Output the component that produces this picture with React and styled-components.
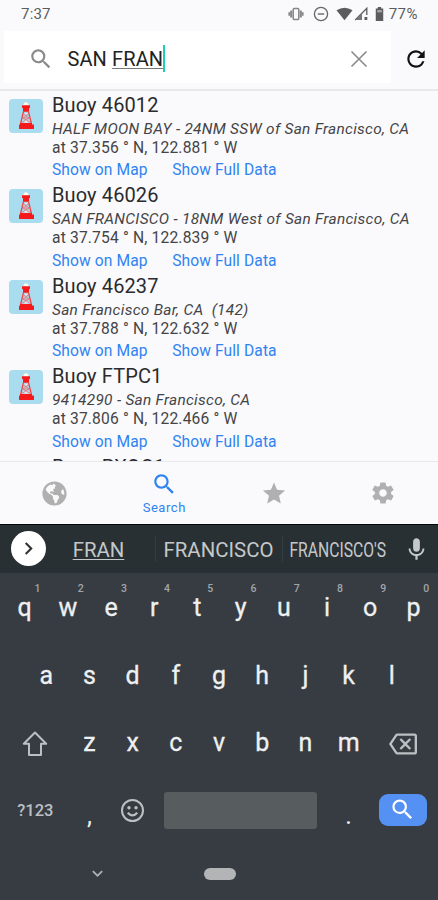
import React from "react";
import styled, { createGlobalStyle } from "styled-components";
import { FaGlobeAmericas } from "react-icons/fa";
import { IoMdSearch, IoMdSettings, IoMdStar } from "react-icons/io";
import {
  MdSearch,
  MdRefresh,
  MdMic,
  MdOutlineBackspace,
  MdChevronRight,
  MdKeyboardArrowDown,
} from "react-icons/md";

const GlobalStyle = createGlobalStyle`
  *, *::before, *::after { box-sizing: border-box; }
  body { margin: 0; background: #fafafc; }
`;

const Screen = styled.div`
  width: 438px;
  height: 900px;
  display: flex;
  flex-direction: column;
  overflow: hidden;
  background: #fafafc;
  color: #2b2b2d;
  font-family: Roboto, "Liberation Sans", sans-serif;
  svg { display: block; flex: none; }
`;

const StatusBar = styled.header`
  height: 30px;
  flex: none;
  display: flex;
  align-items: center;
  justify-content: space-between;
  padding: 0 20px 2px 21px;
  font-size: 15px;
  color: #5c5c5f;
`;

const Clock = styled.span`
  letter-spacing: 0.2px;
`;

const StatusIcons = styled.div`
  display: flex;
  align-items: center;
`;

const StatusGlyph = styled.svg`
  margin-right: ${(p) => p.$gap}px;
`;

const Battery = styled.span`
  letter-spacing: 0.5px;
`;

const SearchHeader = styled.div`
  height: 61px;
  flex: none;
  display: flex;
  padding: 1px 0 6px 4px;
  border-bottom: 2px solid #e9e9eb;
`;

const SearchField = styled.div`
  width: 387px;
  display: flex;
  align-items: center;
  padding: 3px 19px 0 23.5px;
  background: #fff;
  color: #8a8a8a;
`;

const Query = styled.div`
  flex: 1;
  display: flex;
  align-items: center;
  margin-left: 14px;
  font-size: 20px;
  line-height: 22px;
  letter-spacing: 0.1px;
  white-space: pre;
  color: #222;
`;

const Composing = styled.span`
  text-decoration: underline;
  text-decoration-color: #777;
  text-decoration-thickness: 1px;
  text-underline-offset: 2px;
`;

const Caret = styled.span`
  width: 2px;
  height: 27px;
  background: #1fcfb4;
`;

const ReloadButton = styled.div`
  flex: 1;
  display: flex;
  align-items: center;
  justify-content: center;
  padding: 3px 0 0 3px;
  color: #111;
`;

const List = styled.main`
  height: 370px;
  flex: none;
  overflow: hidden;
`;

const Row = styled.article`
  height: 90.5px;
  display: flex;
  padding: 7.5px 0 0 9px;
`;

const Thumb = styled.div`
  width: 34px;
  height: 34px;
  flex: none;
  border-radius: 4px;
  background: #aadcef;
`;

const Details = styled.div`
  margin: -6px 0 0 9px;
  white-space: pre;
`;

const Name = styled.h2`
  margin: 0;
  font-size: 20px;
  font-weight: 400;
  line-height: 24px;
  letter-spacing: 0.12px;
`;

const Place = styled.p`
  margin: 0;
  font-size: 15.4px;
  font-style: italic;
  line-height: 24px;
  letter-spacing: 0.3px;
  color: #444447;
`;

const Position = styled.p`
  margin: 0;
  font-size: 15.6px;
  line-height: 15px;
  letter-spacing: 0.17px;
  color: #444447;
`;

const Links = styled.div`
  display: flex;
  gap: 24.5px;
  margin-top: 2.5px;
  font-size: 15.6px;
  line-height: 24px;
  letter-spacing: 0.1px;
  color: #2f83f2;
`;

const LinkText = styled.span``;

const TabBar = styled.nav`
  height: 63px;
  flex: none;
  display: flex;
  border-top: 1px solid #e9e9eb;
  background: #fafafc;
`;

const Tab = styled.div`
  flex: 1;
  display: flex;
  flex-direction: column;
  align-items: center;
  justify-content: center;
  color: ${(p) => (p.$active ? "#2f83f2" : "#b0b0b1")};
`;

const TabLabel = styled.span`
  margin-top: 3px;
  font-size: 13px;
  line-height: 16px;
  letter-spacing: 0.55px;
`;

const Suggestions = styled.div`
  height: 49px;
  flex: none;
  display: flex;
  align-items: center;
  border-top: 1px solid #050607;
  background: #293033;
  color: #c4c8ca;
  font-size: 20.4px;
`;

const Expand = styled.div`
  width: 35px;
  height: 35px;
  flex: none;
  display: flex;
  align-items: center;
  justify-content: center;
  margin: -2px 0 0 11px;
  border-radius: 50%;
  background: #fff;
  color: #333;
`;

const Suggestion = styled.div`
  width: ${(p) => p.$width}px;
  height: 26px;
  flex: none;
  display: flex;
  align-items: center;
  justify-content: center;
  padding-right: ${(p) => (p.$divided ? 1 : 4)}px;
  border-left: ${(p) => (p.$divided ? "1px solid #363d41" : "none")};
`;

const Word = styled.span`
  flex: none;
  line-height: 24px;
  margin-top: 2px;
  text-decoration: ${(p) => (p.$underlined ? "underline" : "none")};
  text-decoration-thickness: 1px;
  text-underline-offset: 2px;
  transform: scaleX(${(p) => p.$squeeze || 1});
`;

const Mic = styled.div`
  flex: 1;
  display: flex;
  justify-content: center;
`;

const Keyboard = styled.section`
  flex: 1;
  display: flex;
  flex-direction: column;
  padding-top: 1px;
  background: #373c42;
  color: #eef0f1;
`;

const KeyRow = styled.div`
  height: 67.6px;
  display: flex;
  padding: 0 ${(p) => (p.$inset ? 24.6 : 3)}px;
`;

const Key = styled.div`
  position: relative;
  flex: ${(p) => p.$span || 1} 1 0;
  display: flex;
  align-items: center;
  justify-content: center;
  padding-top: ${(p) => p.$drop || 0}px;
  font-size: 25px;
  color: ${(p) => (p.$dim ? "#bcc0c3" : "#eef0f1")};
`;

const Letter = styled.span`
  line-height: 30px;
  margin-top: 1px;
  -webkit-text-stroke: 0.3px currentColor;
`;

const Hint = styled.span`
  position: absolute;
  top: 9px;
  left: 31.5px;
  font-size: 10.5px;
  line-height: 12px;
  font-weight: 500;
  color: #a2a6aa;
`;

const Mode = styled.span`
  font-size: 16.5px;
  font-weight: 500;
`;

const Punctuation = styled.span`
  margin-top: 9px;
`;

const SpaceBar = styled.div`
  width: 153px;
  height: 37px;
  margin-bottom: 1px;
  border-radius: 3px;
  background: #575c5e;
`;

const SearchKey = styled.div`
  width: 48px;
  height: 32px;
  display: flex;
  align-items: center;
  justify-content: center;
  margin-bottom: 2px;
  border-radius: 9px;
  background: #5591f3;
  color: #fff;
`;

const NavBar = styled.footer`
  height: 57px;
  display: flex;
  align-items: center;
  padding: 2px 0 0 87px;
  color: #b1b4b7;
`;

const HomePill = styled.div`
  width: 32px;
  height: 12px;
  margin-left: 96px;
  border-radius: 6px;
  background: #b2b4b6;
`;

const buoys = [
  { name: "Buoy 46012", place: "HALF MOON BAY - 24NM SSW of San Francisco, CA", at: "at 37.356 ° N, 122.881 ° W" },
  { name: "Buoy 46026", place: "SAN FRANCISCO - 18NM West of San Francisco, CA", at: "at 37.754 ° N, 122.839 ° W" },
  { name: "Buoy 46237", place: "San Francisco Bar, CA  (142)", at: "at 37.788 ° N, 122.632 ° W" },
  { name: "Buoy FTPC1", place: "9414290 - San Francisco, CA", at: "at 37.806 ° N, 122.466 ° W" },
  { name: "Buoy PXOC1" },
];

function BuoyIcon() {
  return (
    <svg width="34" height="34" viewBox="0 0 34 34">
      <path d="M14.200 6.800Q14.500 3.500 17 3.200Q19.500 3.500 19.800 6.800z" fill="#fffbe8" />
      <path d="M13 6.300h8v2.400l-1 .6v3.500h-6V9.300l-1-.6z" fill="#f5191b" />
      <path d="M14.500 12.500 11.500 25M19.500 12.500 22.500 25" fill="none" stroke="#ee4548" strokeWidth="1.3" />
      <path d="M14 14.500l6 4.500-8 5M20 14.500 14 19l8 5M13.400 19h7.200" fill="none" stroke="#e8767c" strokeWidth="0.9" />
      <path d="M15.600 14h2.800L17 15.800zM15 23.500l2-2.300 2 2.300z" fill="#fbe3e6" />
      <path d="M11 24h12v1.500h1.500q.5 0 .5.500v3.500q0 .5-.5.500h-14q-.5 0-.5-.5V26q0-.5.5-.5h.5z" fill="#f5191b" />
    </svg>
  );
}

function Buoy({ name, place, at }) {
  return (
    <Row>
      <Thumb><BuoyIcon /></Thumb>
      <Details>
        <Name>{name}</Name>
        {place && <Place>{place}</Place>}
        {at && <Position>{at}</Position>}
        {at && (
          <Links>
            <LinkText>Show on Map</LinkText>
            <LinkText>Show Full Data</LinkText>
          </Links>
        )}
      </Details>
    </Row>
  );
}

function LetterKey({ char, hint }) {
  return (
    <Key>
      <Letter>{char}</Letter>
      {hint && <Hint>{hint}</Hint>}
    </Key>
  );
}

export default function App() {
  return (
    <Screen>
      <GlobalStyle />
      <StatusBar>
        <Clock>7:37</Clock>
        <StatusIcons>
          <StatusGlyph $gap={9} width="16" height="14" viewBox="0 0 16 14" fill="none" stroke="#858588">
            <rect x="5.200" y="1.500" width="5.600" height="11" rx="1" strokeWidth="1.5" />
            <path d="M3.200 3.500v7M12.800 3.500v7" strokeWidth="2" />
            <path d="M1.300 5.300v3.400M14.700 5.300v3.400" strokeWidth="1.800" />
          </StatusGlyph>
          <StatusGlyph $gap={7} width="16" height="16" viewBox="0 0 16 16" fill="none" stroke="#68686b">
            <circle cx="8" cy="8" r="6.6" strokeWidth="1.3" />
            <path d="M4.8 8h6.4" strokeWidth="1.4" />
          </StatusGlyph>
          <StatusGlyph $gap={1} width="17" height="14" viewBox="0 0 17 14" fill="#5c5c5f">
            <path d="M.5 3.2Q8.500-1.800 16.500 3.200L8.500 13.200z" />
          </StatusGlyph>
          <StatusGlyph $gap={7} width="14" height="14" viewBox="0 0 14 14">
            <path d="M1.200 13 12.800 1.300V8" fill="none" stroke="#5c5c5f" strokeWidth="1.3" />
            <path d="M1.200 13 8 6v7z" fill="#77777a" />
            <path d="M10.500 10h2.800v3h-2.800z" fill="#5c5c5f" />
          </StatusGlyph>
          <StatusGlyph $gap={5} width="9" height="14" viewBox="0 0 9 15" fill="#5c5c5f">
            <path d="M2.700 0h3.600v1.500H8.500V15H.5V1.500h2.200z" />
            <path d="M2 3.200h5v2.600H2z" fill="#a3a3a5" />
          </StatusGlyph>
          <Battery>77%</Battery>
        </StatusIcons>
      </StatusBar>

      <SearchHeader>
        <SearchField>
          <MdSearch size={26} />
          <Query>
            {"SAN "}
            <Composing>FRAN</Composing>
            <Caret />
          </Query>
          <svg width="26" height="26" viewBox="0 0 26 26" fill="none" stroke="currentColor" strokeWidth="1.6">
            <path d="M5.500 5.500l15 15M20.500 5.500l-15 15" />
          </svg>
        </SearchField>
        <ReloadButton><MdRefresh size={26} /></ReloadButton>
      </SearchHeader>

      <List>
        {buoys.map((b) => <Buoy key={b.name} {...b} />)}
      </List>

      <TabBar>
        <Tab><FaGlobeAmericas size={25} /></Tab>
        <Tab $active>
          <IoMdSearch size={26} />
          <TabLabel>Search</TabLabel>
        </Tab>
        <Tab><IoMdStar size={28} /></Tab>
        <Tab><IoMdSettings size={26} /></Tab>
      </TabBar>

      <Suggestions>
        <Expand><MdChevronRight size={25} /></Expand>
        <Suggestion $width={109}><Word $underlined>FRAN</Word></Suggestion>
        <Suggestion $width={127} $divided><Word>FRANCISCO</Word></Suggestion>
        <Suggestion $width={112} $divided><Word $squeeze={0.77}>FRANCISCO'S</Word></Suggestion>
        <Mic><MdMic size={27} /></Mic>
      </Suggestions>

      <Keyboard>
        <KeyRow>
          {[..."qwertyuiop"].map((c, i) => <LetterKey key={c} char={c} hint={String((i + 1) % 10)} />)}
        </KeyRow>
        <KeyRow $inset>
          {[..."asdfghjkl"].map((c) => <LetterKey key={c} char={c} />)}
        </KeyRow>
        <KeyRow>
          <Key $span={1.5} $dim $drop={1}>
            <svg width="28" height="26" viewBox="0 0 28 26" fill="none" stroke="currentColor" strokeWidth="2" strokeLinejoin="round">
              <path d="M14 2.500 25.200 13.700h-5.200V25H8V13.700H2.800z" />
            </svg>
          </Key>
          {[..."zxcvbnm"].map((c) => <LetterKey key={c} char={c} />)}
          <Key $span={1.5} $dim $drop={3}><MdOutlineBackspace size={28} /></Key>
        </KeyRow>
        <KeyRow>
          <Key $span={1.5} $dim><Mode>?123</Mode></Key>
          <Key><Punctuation>,</Punctuation></Key>
          <Key $dim>
            <svg width="26" height="26" viewBox="0 0 26 26" fill="none" stroke="currentColor" strokeWidth="2">
              <circle cx="12.500" cy="12.500" r="10.500" />
              <path d="M7.800 14.800q4.700 5.200 9.400 0" strokeWidth="2.400" />
              <circle cx="9" cy="9.800" r="1.700" fill="currentColor" stroke="none" />
              <circle cx="16" cy="9.800" r="1.700" fill="currentColor" stroke="none" />
            </svg>
          </Key>
          <Key $span={4}><SpaceBar /></Key>
          <Key><Punctuation>.</Punctuation></Key>
          <Key $span={1.5}><SearchKey><MdSearch size={27} /></SearchKey></Key>
        </KeyRow>
        <NavBar>
          <MdKeyboardArrowDown size={21} />
          <HomePill />
        </NavBar>
      </Keyboard>
    </Screen>
  );
}
